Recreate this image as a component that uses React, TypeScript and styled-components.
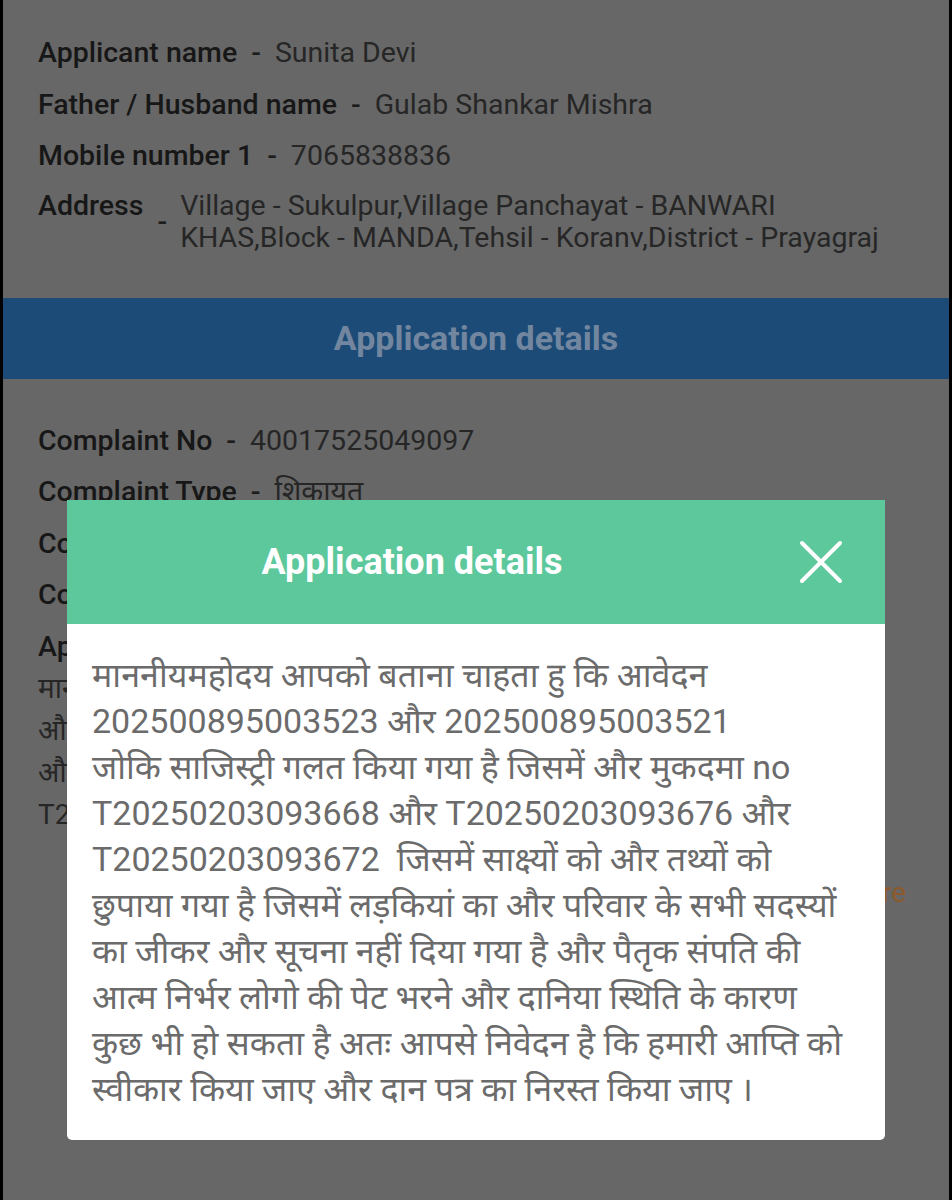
import React from "react";
import styled, { createGlobalStyle } from "styled-components";

const GlobalStyle = createGlobalStyle`
  html, body {
    margin: 0;
    padding: 0;
    background: #000;
  }
  body {
    font-family: Roboto, "Noto Sans Devanagari", "Noto Sans", "DejaVu Sans", sans-serif;
  }
  * {
    box-sizing: border-box;
  }
`;

type Field = {
  label: string;
  value: string;
};

const applicant: Field[] = [
  { label: "Applicant name", value: "Sunita Devi" },
  { label: "Father / Husband name", value: "Gulab Shankar Mishra" },
  { label: "Mobile number 1", value: "7065838836" },
];

const complaint: Field[] = [
  { label: "Complaint No", value: "40017525049097" },
  { label: "Complaint Type", value: "शिकायत" },
  { label: "Complaint Category", value: "भूमि विवाद" },
  { label: "Concerned Department", value: "राजस्व विभाग" },
];

const descriptionLines = [
  "माननीयमहोदय आपको बताना चाहता हु कि आवेदन 202500895003523",
  "और 202500895003521 जोकि साजिस्ट्री गलत किया गया है जिसमें",
  "और मुकदमा no T20250203093668 और",
  "T20250203093676 और T20250203093672 जिसमें साक्ष्यों को और तथ्यों को छुपाया गया है",
];

const modalLines = [
  "माननीयमहोदय आपको बताना चाहता हु कि आवेदन",
  "202500895003523 और 202500895003521",
  "जोकि साजिस्ट्री गलत किया गया है जिसमें और मुकदमा no",
  "T20250203093668 और T20250203093676 और",
  "T20250203093672  जिसमें साक्ष्यों को और तथ्यों को",
  "छुपाया गया है जिसमें लड़कियां का और परिवार के सभी सदस्यों",
  "का जीकर और सूचना नहीं दिया गया है और पैतृक संपति की",
  "आत्म निर्भर लोगो की पेट भरने और दानिया स्थिति के कारण",
  "कुछ भी हो सकता है अतः आपसे निवेदन है कि हमारी आप्ति को",
  "स्वीकार किया जाए और दान पत्र का निरस्त किया जाए ।",
];

function App() {
  return (
    <>
      <GlobalStyle />
      <Screen>
        <Section className="top">
          {applicant.map((f) => (
            <Row key={f.label}>
              <Label>{f.label}</Label>
              <Sep>-</Sep>
              <Value>{f.value}</Value>
            </Row>
          ))}
          <AddressRow>
            <Label>Address</Label>
            <AddressSep>-</AddressSep>
            <AddressValue>
              Village - Sukulpur,Village Panchayat - BANWARI
              <br />
              KHAS,Block - MANDA,Tehsil - Koranv,District - Prayagraj
            </AddressValue>
          </AddressRow>
        </Section>

        <SectionBar>Application details</SectionBar>

        <Section className="bottom">
          {complaint.map((f) => (
            <Row key={f.label}>
              <Label>{f.label}</Label>
              <Sep>-</Sep>
              <Value>{f.value}</Value>
            </Row>
          ))}
          <Row>
            <Label>Application Description</Label>
            <Sep>-</Sep>
          </Row>
          <Description>
            {descriptionLines.map((line, i) => (
              <DescLine key={i}>{line}</DescLine>
            ))}
          </Description>
          <MoreLink>View more</MoreLink>
        </Section>

        <Backdrop>
          <Modal>
            <ModalHeader>
              <ModalTitle>Application details</ModalTitle>
              <CloseButton aria-label="Close">
                <svg width="44" height="44" viewBox="0 0 44 44">
                  <path
                    d="M3 3 L41 41 M41 3 L3 41"
                    stroke="#fff"
                    strokeWidth="4"
                    strokeLinecap="round"
                    fill="none"
                  />
                </svg>
              </CloseButton>
            </ModalHeader>
            <ModalBody>
              {modalLines.map((line, i) => (
                <BodyLine key={i}>{line}</BodyLine>
              ))}
            </ModalBody>
          </Modal>
        </Backdrop>
      </Screen>
    </>
  );
}

const Screen = styled.div`
  position: relative;
  width: 952px;
  height: 1200px;
  overflow: hidden;
  background: #676767;
  border-left: 3px solid #000;
  border-right: 3px solid #000;
`;

const Section = styled.div`
  padding: 0 44px 0 35px;

  &.top {
    padding-top: 27px;
    padding-bottom: 44px;
  }

  &.bottom {
    padding-top: 36px;
  }
`;

const Row = styled.div`
  display: flex;
  align-items: baseline;
  height: 51.5px;
  line-height: 51.5px;
  font-size: 28.5px;
  white-space: nowrap;
`;

const Label = styled.span`
  font-weight: 500;
  color: #171717;
`;

const Sep = styled.span`
  margin: 0 14px;
  color: #1c1c1c;
  font-weight: 500;
`;

const Value = styled.span`
  color: #262626;
`;

const AddressRow = styled.div`
  display: flex;
  align-items: flex-start;
  margin-top: 8px;
  font-size: 28.5px;
  line-height: 32px;
`;

const AddressSep = styled.span`
  align-self: center;
  margin: 0 13px 0 14px;
  color: #1c1c1c;
  font-weight: 500;
`;

const AddressValue = styled.div`
  color: #262626;
`;

const SectionBar = styled.div`
  height: 81px;
  display: flex;
  align-items: center;
  justify-content: center;
  background: #1c4b78;
  color: #72879f;
  font-size: 34px;
  font-weight: 700;
`;

const Description = styled.div`
  margin-top: -4px;
  font-size: 28px;
  line-height: 42px;
  color: #262626;
`;

const DescLine = styled.div`
  width: 859px;
  white-space: nowrap;
  overflow: hidden;
  text-overflow: ellipsis;
`;

const MoreLink = styled.div`
  margin-top: 40px;
  text-align: right;
  margin-right: -1px;
  font-size: 28px;
  color: #8c5a2b;
`;

const Backdrop = styled.div`
  position: absolute;
  inset: 0;
  display: flex;
  justify-content: center;
  align-items: flex-start;
  padding-top: 500px;
`;

const Modal = styled.div`
  width: 818px;
  background: #fff;
  border-radius: 0 0 5px 5px;
  overflow: hidden;
`;

const ModalHeader = styled.div`
  display: flex;
  align-items: center;
  height: 124px;
  background: #5dc89c;
`;

const ModalTitle = styled.div`
  flex: 1;
  text-align: center;
  color: #fff;
  font-size: 36px;
  font-weight: 700;
`;

const CloseButton = styled.button`
  width: 128px;
  height: 100%;
  display: flex;
  align-items: center;
  justify-content: center;
  padding: 0;
  border: none;
  background: transparent;
`;

const ModalBody = styled.div`
  padding: 28px 20px 28px 25px;
  font-size: 34px;
  line-height: 46px;
  color: #6b6b6b;
`;

const BodyLine = styled.div`
  white-space: pre;
`;

export default App;
